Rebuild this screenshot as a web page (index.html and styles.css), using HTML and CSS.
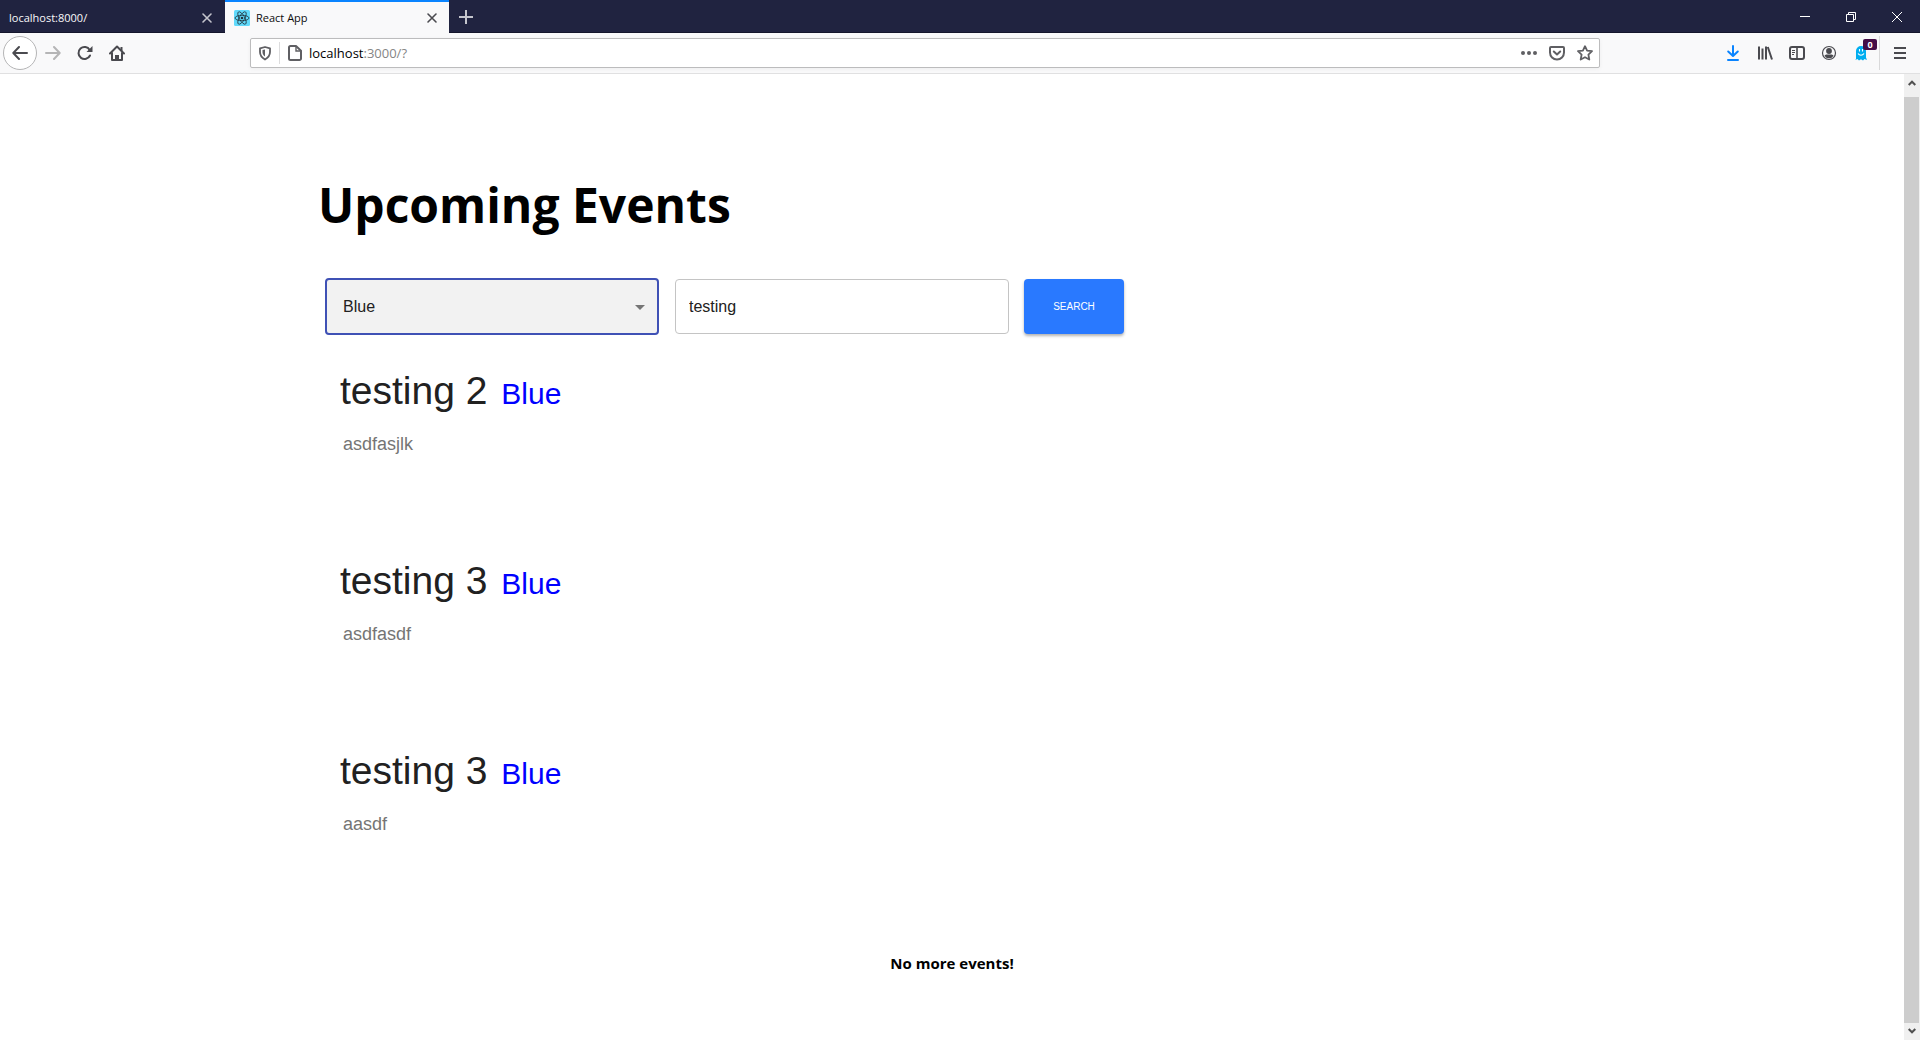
FILE: index.html
```html
<!DOCTYPE html>
<html lang="en">
<head>
<meta charset="utf-8">
<meta name="viewport" content="width=device-width, initial-scale=1">
<title>React App</title>
<link rel="stylesheet" href="styles.css">
</head>
<body>
<header class="tabbar">
  <div class="tab">
    <span class="tab-title">localhost:8000/</span>
    <button class="tab-close" aria-label="Close tab"><svg width="12" height="12" viewBox="0 0 12 12"><path d="M2 2l8 8M10 2l-8 8" stroke="currentColor" stroke-width="1.6" stroke-linecap="round"/></svg></button>
  </div>
  <div class="tab tab-active">
    <svg class="favicon" width="16" height="16" viewBox="0 0 16 16"><rect width="16" height="16" rx="1.5" fill="#61dafb"/><g fill="none" stroke="#20333d" stroke-width=".8"><ellipse cx="8" cy="8" rx="7" ry="2.7"/><ellipse cx="8" cy="8" rx="7" ry="2.7" transform="rotate(60 8 8)"/><ellipse cx="8" cy="8" rx="7" ry="2.7" transform="rotate(120 8 8)"/></g><circle cx="8" cy="8" r="1.3" fill="#20333d"/></svg>
    <span class="tab-title">React App</span>
    <button class="tab-close" aria-label="Close tab"><svg width="12" height="12" viewBox="0 0 12 12"><path d="M2 2l8 8M10 2l-8 8" stroke="currentColor" stroke-width="1.6" stroke-linecap="round"/></svg></button>
  </div>
  <button class="new-tab" aria-label="New tab"><svg width="14" height="14" viewBox="0 0 14 14"><path d="M7 0v14M0 7h14" stroke="currentColor" stroke-width="2"/></svg></button>
  <div class="window-controls">
    <button aria-label="Minimise"><svg width="10" height="10" viewBox="0 0 10 10"><path d="M0 4.500h10" stroke="#fff"/></svg></button>
    <button aria-label="Restore"><svg width="10" height="10" viewBox="0 0 10 10" fill="none" stroke="#fff"><path d="M.5 2.500h7v7h-7zM2.500 2.500v-2h7v7h-2"/></svg></button>
    <button aria-label="Close"><svg width="10" height="10" viewBox="0 0 10 10"><path d="M0 0l10 10M10 0L0 10" stroke="#fff"/></svg></button>
  </div>
</header>

<nav class="toolbar" aria-label="Browser toolbar">
  <button class="tool back" aria-label="Back"><svg width="16" height="16" viewBox="0 0 16 16"><path d="M15 8H1.500M7 2L1.300 8 7 14" fill="none" stroke="#4a4a4f" stroke-width="2" stroke-linecap="round" stroke-linejoin="round"/></svg></button>
  <button class="tool" aria-label="Forward"><svg width="16" height="16" viewBox="0 0 16 16"><path d="M1 8h13.500M9 2l5.700 6L9 14" fill="none" stroke="#b5b5b6" stroke-width="2" stroke-linecap="round" stroke-linejoin="round"/></svg></button>
  <button class="tool" aria-label="Reload"><svg width="16" height="16" viewBox="0 0 16 16"><path d="M13 10.500a6 6 0 1 1-.3-5.500" fill="none" stroke="#4a4a4f" stroke-width="2" stroke-linecap="round"/><path d="M15.500 1v6h-6z" fill="#4a4a4f"/></svg></button>
  <button class="tool" aria-label="Home"><svg width="16" height="16" viewBox="0 0 16 16"><path d="M1 8.500L8 1.500l7 7M3 8v7h10V8" fill="none" stroke="#4a4a4f" stroke-width="2" stroke-linecap="round" stroke-linejoin="round"/><path d="M6 15v-5h4v5z" fill="#4a4a4f"/><path d="M11.500 2h2v4h-2z" fill="#4a4a4f"/></svg></button>
  <div class="urlbar">
    <button class="url-icon shield" aria-label="Tracking protection"><svg width="16" height="16" viewBox="0 0 16 16"><path d="M8 2l5 1.300v3.700c0 3-1.500 5.500-5 7.500-3.500-2-5-4.500-5-7.500V3.300z" fill="none" stroke="#5f5f63" stroke-width="1.800" stroke-linejoin="round"/><path d="M8 4.500v7C6 10 5.500 8.500 5.500 7V5z" fill="#5f5f63"/></svg></button>
    <button class="url-icon site" aria-label="Site information"><svg width="16" height="16" viewBox="0 0 16 16"><path d="M3.500 1H9l5 4.700V13.500a1.500 1.500 0 0 1-1.500 1.500h-9A1.500 1.500 0 0 1 2 13.500v-11A1.500 1.500 0 0 1 3.500 1z" fill="none" stroke="#5f5f63" stroke-width="2" stroke-linejoin="round"/><path d="M9 1.500V6h4.500" fill="none" stroke="#5f5f63" stroke-width="1.400"/></svg></button>
    <span class="address">localhost<span class="address-dim">:3000/?</span></span>
    <button class="url-action" aria-label="Page actions"><svg width="16" height="16" viewBox="0 0 16 16" fill="#5f5f63"><circle cx="2" cy="8" r="2"/><circle cx="8" cy="8" r="2"/><circle cx="14" cy="8" r="2"/></svg></button>
    <button class="url-action" aria-label="Save to Pocket"><svg width="16" height="16" viewBox="0 0 16 16" fill="none" stroke="#5f5f63" stroke-width="2" stroke-linecap="round" stroke-linejoin="round"><path d="M2 2h12a1 1 0 0 1 1 1v4.500a7 7 0 0 1-14 0V3a1 1 0 0 1 1-1z"/><path d="M4.800 6.500L8 9.500l3.200-3"/></svg></button>
    <button class="url-action" aria-label="Bookmark"><svg width="16" height="16" viewBox="0 0 16 16"><path d="M8 1.200l2.100 4.400 4.900.6-3.600 3.400.9 4.900L8 12.200l-4.300 2.300.9-4.900L1 6.200l4.900-.6z" fill="none" stroke="#5f5f63" stroke-width="1.800" stroke-linejoin="round"/></svg></button>
  </div>
  <button class="tool" aria-label="Downloads"><svg width="16" height="16" viewBox="0 0 16 16" fill="none" stroke="#0a84ff" stroke-width="2" stroke-linecap="round" stroke-linejoin="round"><path d="M8 1v9.500M3.200 6.500L8 11l4.800-4.500M3 15h10"/></svg></button>
  <button class="tool" aria-label="Library"><svg width="16" height="16" viewBox="0 0 16 16" fill="none" stroke="#4a4a4f" stroke-width="2"><path d="M2 1.500v13M5.500 3.500v11M9 1.500v13M10.800 2l4.200 12.500"/></svg></button>
  <button class="tool" aria-label="Sidebars"><svg width="16" height="16" viewBox="0 0 16 16" fill="none" stroke="#4a4a4f"><rect x="1" y="2" width="14" height="12" rx="2" stroke-width="2"/><path d="M8 2v12" stroke-width="1.600"/><path d="M3 5.500h3M3 7.500h3M3 9.500h2"/></svg></button>
  <button class="tool" aria-label="Account"><svg width="16" height="16" viewBox="0 0 16 16"><circle cx="8" cy="8" r="6.500" fill="none" stroke="#4a4a4f" stroke-width="1.200"/><circle cx="8" cy="6" r="2.900" fill="#4a4a4f"/><path d="M3.500 10.500C5 9 6 9.500 8 9.500s3-.5 4.500 1C11.500 12.500 10 13.300 8 13.300s-3.500-.8-4.500-2.800z" fill="#4a4a4f"/></svg></button>
  <button class="tool ghost" aria-label="Ghostery"><svg width="16" height="16" viewBox="0 0 16 16"><path d="M3 14V6a5 5 0 0 1 10 0v6.500l1 2.500-2.500-1-1.500 1.500L8 14.300 6 15.500l-1.500-1.500L2 15z" fill="#00aef0"/><path d="M6.500 4v2.500M9.500 4v2.500M5 8.500c1.500 2.300 4.500 2.300 6 0" fill="none" stroke="#fff" stroke-width="1.100"/></svg><span class="badge">0</span></button>
  <button class="tool menu" aria-label="Menu"><svg width="16" height="16" viewBox="0 0 16 16"><path d="M2 3h12M2 8h12M2 13h12" stroke="#4a4a4f" stroke-width="2"/></svg></button>
</nav>

<div class="viewport">
  <main class="page">
    <div class="container">
      <h1 class="title">Upcoming Events</h1>
      <form class="filters">
        <div class="select-wrap">
          <select class="select" aria-label="Colour"><option selected>Blue</option></select>
          <svg class="caret" width="10" height="5" viewBox="0 0 10 5"><path d="M0 0h10L5 5z" fill="#757575"/></svg>
        </div>
        <input class="field" type="text" value="testing" aria-label="Search text">
        <button class="search" type="button">SEARCH</button>
      </form>
      <article class="event">
        <h2 class="event-title">testing 2 <span class="event-tag">Blue</span></h2>
        <p class="event-text">asdfasjlk</p>
      </article>
      <article class="event">
        <h2 class="event-title">testing 3 <span class="event-tag">Blue</span></h2>
        <p class="event-text">asdfasdf</p>
      </article>
      <article class="event">
        <h2 class="event-title">testing 3 <span class="event-tag">Blue</span></h2>
        <p class="event-text">aasdf</p>
      </article>
      <p class="end">No more events!</p>
    </div>
  </main>
  <div class="scrollbar" aria-hidden="true">
    <svg class="arrow" width="8" height="6" viewBox="0 0 8 6"><path d="M.7 5L4 1.700 7.300 5" fill="none" stroke="#505050" stroke-width="2"/></svg>
    <div class="thumb"></div>
    <svg class="arrow" width="8" height="6" viewBox="0 0 8 6"><path d="M.7 1L4 4.300 7.300 1" fill="none" stroke="#505050" stroke-width="2"/></svg>
  </div>
</div>
</body>
</html>
```

FILE: styles.css
```css
* {
  box-sizing: border-box;
}

body {
  margin: 0;
  height: 100vh;
  display: flex;
  flex-direction: column;
  overflow: hidden;
  background: #fff;
  color: #000;
  font-family: "Open Sans", "Noto Sans", sans-serif;
}

button {
  display: flex;
  align-items: center;
  justify-content: center;
  padding: 0;
  border: 0;
  background: none;
  color: inherit;
  font: inherit;
}

/* Tab strip */
.tabbar {
  display: flex;
  flex: none;
  height: 33px;
  background: #202340;
  box-shadow: inset 0 -1px #14162c;
  color: #f9f9fa;
  font-size: 11px;
}

.tab {
  display: flex;
  align-items: center;
  width: 225px;
  padding: 2px 8px 0 9px;
}

.tab-active {
  width: 224px;
  padding: 0 7px 0 9px;
  border-top: 2px solid #0a84ff;
  background: #f9f9fa;
  color: #0c0c0d;
}

.favicon {
  margin-right: 6px;
}

.tab-title {
  flex: 1;
}

.tab-close {
  width: 20px;
  height: 20px;
  color: #c4c5cd;
}

.tab-active .tab-close {
  color: #4a4a4f;
}

.new-tab {
  width: 34px;
  color: #c4c5cd;
}

.window-controls {
  display: flex;
  margin-left: auto;
}

.window-controls button {
  width: 46px;
}

/* Navigation toolbar */
.toolbar {
  display: flex;
  align-items: center;
  flex: none;
  height: 41px;
  padding: 0 0 0 3px;
  border-bottom: 1px solid #e0e0e1;
  background: #f9f9fa;
}

.tool {
  position: relative;
  width: 32px;
  height: 34px;
}

.back {
  width: 34px;
  border: 1px solid #b5b5b6;
  border-radius: 50%;
  background: #fff;
}

.urlbar {
  display: flex;
  align-items: center;
  flex: 1;
  height: 30px;
  margin: 0 117px;
  border: 1px solid #bcbcbd;
  border-radius: 2px;
  background: #fff;
  box-shadow: 0 1px 4px rgba(0, 0, 0, 0.05);
}

.url-icon {
  width: 29px;
  height: 22px;
}

.shield {
  border-right: 1px solid #dcdcdd;
}

.address {
  flex: 1;
  font-size: 13px;
}

.address-dim {
  color: #858585;
}

.url-action {
  width: 28px;
  height: 28px;
}

.badge {
  position: absolute;
  top: 3px;
  right: 0;
  width: 14px;
  border-radius: 2px;
  background: #440d46;
  color: #fff;
  font-size: 9px;
  font-weight: 700;
  line-height: 11px;
}

.menu {
  width: 41px;
  margin-left: 2px;
  border-left: 1px solid #d9d9da;
}

/* Page area */
.viewport {
  display: flex;
  flex: 1;
  min-height: 0;
}

.page {
  flex: 1;
  overflow: hidden;
}

.container {
  max-width: 1280px;
  margin: 0 auto;
  padding: 95px 6px 0;
}

.title {
  margin: 0;
  font-size: 48px;
  font-weight: 700;
  line-height: 72px;
}

.filters {
  display: flex;
  align-items: center;
  padding: 37px 7px 0;
  font-family: "Liberation Sans", Arial, sans-serif;
}

.select-wrap {
  position: relative;
  width: 334px;
  margin-right: 16px;
}

.select {
  appearance: none;
  width: 100%;
  height: 57px;
  padding: 0 16px;
  border: 2px solid #3f51b5;
  border-radius: 4px;
  background: #f2f2f2;
  color: #212121;
  font: 16px "Liberation Sans", Arial, sans-serif;
}

.caret {
  position: absolute;
  top: 27px;
  right: 14px;
}

.field {
  width: 334px;
  height: 55px;
  margin-right: 15px;
  padding: 0 13px;
  border: 1px solid #c4c4c4;
  border-radius: 4px;
  background: #fff;
  color: #212121;
  font: 16px "Liberation Sans", Arial, sans-serif;
}

.search {
  width: 100px;
  height: 55px;
  border-radius: 4px;
  background: #2979ff;
  box-shadow: 0 2px 3px rgba(0, 0, 0, 0.3);
  color: #fff;
  font-size: 10px;
}

.event {
  height: 190px;
  padding: 32px 22px 0;
  font-family: "Liberation Sans", Arial, sans-serif;
}

.event-title {
  margin: 0;
  color: #212121;
  font-size: 39px;
  font-weight: 400;
  line-height: 48px;
}

.event-tag {
  margin-left: 3px;
  color: #00f;
  font-size: 30px;
}

.event-text {
  margin: 14px 3px 0;
  color: #757575;
  font-size: 18px;
  line-height: 24px;
}

.end {
  margin: 46px 0 0;
  font-size: 15px;
  font-weight: 700;
  line-height: 24px;
  text-align: center;
}

.scrollbar {
  display: flex;
  flex-direction: column;
  align-items: center;
  width: 16px;
  padding: 6px 1px 6px 0;
  background: #f0f0f0;
}

.arrow {
  flex: none;
}

.thumb {
  flex: 1;
  width: 100%;
  margin: 11px 0 5px;
  background: #cdcdcd;
}
```
